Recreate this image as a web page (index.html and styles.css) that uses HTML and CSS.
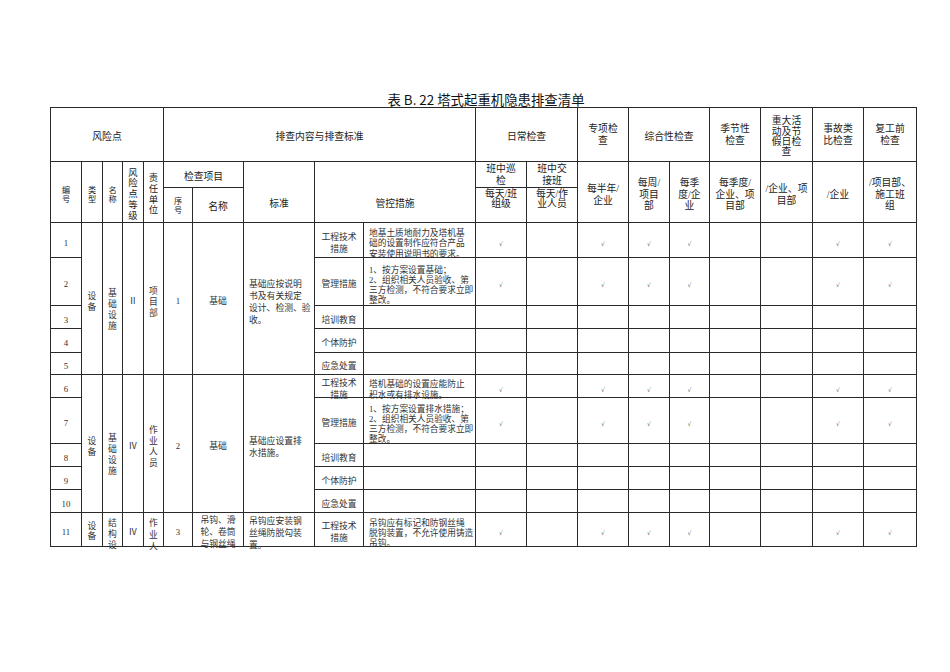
FILE: index.html
```html
<!DOCTYPE html>
<html lang="zh-CN">
<head>
<meta charset="utf-8">
<title>表B.22塔式起重机隐患排查清单</title>
<link rel="stylesheet" href="styles.css">
</head>
<body>
<div class="page">
  <div class="title">表 B. 22 塔式起重机隐患排查清单</div>
  <div class="clip">
    <div class="sheet">
      <!-- header row A -->
      <div class="c h k5">风险点</div>
      <div class="c h k5">排查内容与排查标准</div>
      <div class="c h k2">日常检查</div>
      <div class="c h h2">专项检<br>查</div>
      <div class="c h k2">综合性检查</div>
      <div class="c h h2">季节性<br>检查</div>
      <div class="c h h4">重大活<br>动及节<br>假日检<br>查</div>
      <div class="c h h2">事故类<br>比检查</div>
      <div class="c h h2">复工前<br>检查</div>

      <!-- header row B -->
      <div class="c hb sm r2 p5">编<br>号</div>
      <div class="c hb sm r2 p5">类<br>型</div>
      <div class="c hb sm r2 p5">名<br>称</div>
      <div class="c hb vt r2 p5">风<br>险<br>点<br>等<br>级</div>
      <div class="c hb vt r2 p5">责<br>任<br>单<br>位</div>
      <div class="c hb k2 p4">检查项目</div>
      <div class="c hb r2 p23">标准</div>
      <div class="c hb k2 r2 p23">管控措施</div>
      <div class="c hb">班中巡<br>检</div>
      <div class="c hb">班中交<br>接班</div>
      <div class="c hb r2 p5">每半年/<br>企业</div>
      <div class="c hb r2 p5">每周/<br>项目<br>部</div>
      <div class="c hb r2 p5">每季<br>度/企<br>业</div>
      <div class="c hb r2 p5">每季度/<br>企业、项<br>目部</div>
      <div class="c hb r2 p5">/企业、项<br>目部</div>
      <div class="c hb r2 p5">/企业</div>
      <div class="c hb r2 p5">/项目部、<br>施工班<br>组</div>

      <!-- header row C -->
      <div class="c hb sm p2">序<br>号</div>
      <div class="c hb p4">名称</div>
      <div class="c hb tl pb12">每天/班<br>组级</div>
      <div class="c hb tl pb12">每天/作<br>业人员</div>

      <!-- row 1 -->
      <div class="c">1</div>
      <div class="c r5 lh11">设<br>备</div>
      <div class="c r5 lh11 p20">基<br>础<br>设<br>施</div>
      <div class="c r5">Ⅱ</div>
      <div class="c r5 lh11">项<br>目<br>部</div>
      <div class="c r5">1</div>
      <div class="c r5">基础</div>
      <div class="c r5 L lh12">基础应按说明<br>书及有关规定<br>设计、检测、验<br>收。</div>
      <div class="c">工程技术<br>措施</div>
      <div class="c L t">地基土质地耐力及塔机基<br>础的设置制作应符合产品<br>安装使用说明书的要求。</div>
      <div class="c ck">√</div><div class="c"></div><div class="c ck">√</div><div class="c ck">√</div><div class="c ck">√</div><div class="c"></div><div class="c"></div><div class="c ck">√</div><div class="c ck">√</div>

      <!-- row 2 -->
      <div class="c">2</div>
      <div class="c">管理措施</div>
      <div class="c L t">1、按方案设置基础；<br>2、组织相关人员验收、第<br>三方检测，不符合要求立即<br>整改。</div>
      <div class="c ck">√</div><div class="c"></div><div class="c ck">√</div><div class="c ck">√</div><div class="c ck">√</div><div class="c"></div><div class="c"></div><div class="c ck">√</div><div class="c ck">√</div>

      <!-- row 3 -->
      <div class="c">3</div>
      <div class="c">培训教育</div>
      <div class="c"></div>
      <div class="c"></div><div class="c"></div><div class="c"></div><div class="c"></div><div class="c"></div><div class="c"></div><div class="c"></div><div class="c"></div><div class="c"></div>

      <!-- row 4 -->
      <div class="c">4</div>
      <div class="c">个体防护</div>
      <div class="c"></div>
      <div class="c"></div><div class="c"></div><div class="c"></div><div class="c"></div><div class="c"></div><div class="c"></div><div class="c"></div><div class="c"></div><div class="c"></div>

      <!-- row 5 -->
      <div class="c">5</div>
      <div class="c">应急处置</div>
      <div class="c"></div>
      <div class="c"></div><div class="c"></div><div class="c"></div><div class="c"></div><div class="c"></div><div class="c"></div><div class="c"></div><div class="c"></div><div class="c"></div>

      <!-- row 6 -->
      <div class="c">6</div>
      <div class="c r5 lh11">设<br>备</div>
      <div class="c r5 lh11 p20">基<br>础<br>设<br>施</div>
      <div class="c r5">Ⅳ</div>
      <div class="c r5 lh11">作<br>业<br>人<br>员</div>
      <div class="c r5">2</div>
      <div class="c r5">基础</div>
      <div class="c r5 L lh12">基础应设置排<br>水措施。</div>
      <div class="c">工程技术<br>措施</div>
      <div class="c L t">塔机基础的设置应能防止<br>积水或有排水设施。</div>
      <div class="c ck">√</div><div class="c"></div><div class="c ck">√</div><div class="c ck">√</div><div class="c ck">√</div><div class="c"></div><div class="c"></div><div class="c ck">√</div><div class="c ck">√</div>

      <!-- row 7 -->
      <div class="c">7</div>
      <div class="c">管理措施</div>
      <div class="c L t">1、按方案设置排水措施；<br>2、组织相关人员验收、第<br>三方检测，不符合要求立即<br>整改。</div>
      <div class="c ck">√</div><div class="c"></div><div class="c ck">√</div><div class="c ck">√</div><div class="c ck">√</div><div class="c"></div><div class="c"></div><div class="c ck">√</div><div class="c ck">√</div>

      <!-- row 8 -->
      <div class="c">8</div>
      <div class="c">培训教育</div>
      <div class="c"></div>
      <div class="c"></div><div class="c"></div><div class="c"></div><div class="c"></div><div class="c"></div><div class="c"></div><div class="c"></div><div class="c"></div><div class="c"></div>

      <!-- row 9 -->
      <div class="c">9</div>
      <div class="c">个体防护</div>
      <div class="c"></div>
      <div class="c"></div><div class="c"></div><div class="c"></div><div class="c"></div><div class="c"></div><div class="c"></div><div class="c"></div><div class="c"></div><div class="c"></div>

      <!-- row 10 -->
      <div class="c">10</div>
      <div class="c">应急处置</div>
      <div class="c"></div>
      <div class="c"></div><div class="c"></div><div class="c"></div><div class="c"></div><div class="c"></div><div class="c"></div><div class="c"></div><div class="c"></div><div class="c"></div>

      <!-- row 11 (continues on the next page, cut at the page edge) -->
      <div class="c">11</div>
      <div class="c lh10 p2">设<br>备</div>
      <div class="c lh11 top5">结<br>构<br>设</div>
      <div class="c">Ⅳ</div>
      <div class="c lh12 top4">作<br>业<br>人</div>
      <div class="c">3</div>
      <div class="c">吊钩、滑<br>轮、卷筒<br>与钢丝绳</div>
      <div class="c L lh12">吊钩应安装钢<br>丝绳防脱勾装<br>置。</div>
      <div class="c">工程技术<br>措施</div>
      <div class="c L t">吊钩应有标记和防钢丝绳<br>脱钩装置，不允许使用铸造<br>吊钩。</div>
      <div class="c ck">√</div><div class="c"></div><div class="c ck">√</div><div class="c ck">√</div><div class="c ck">√</div><div class="c"></div><div class="c"></div><div class="c ck">√</div><div class="c ck">√</div>
    </div>
  </div>
</div>
</body>
</html>
```

FILE: styles.css
```css
html, body {
  margin: 0;
  padding: 0;
  background: #ffffff;
}

body {
  font-family: "Liberation Serif", "Noto Sans CJK SC", serif;
  color: #222222;
}

.page {
  margin-left: 50px;
  width: 867px;
  padding-top: 91px;
}

.title {
  height: 16px;
  line-height: 16px;
  font-family: "Noto Sans CJK SC", sans-serif;
  font-size: 13.4px;
  text-align: center;
  padding-left: 5px;
  color: #111111;
  white-space: nowrap;
}

.clip {
  height: 443px;
  overflow: hidden;
}

.sheet {
  display: grid;
  grid-template-columns: 31px 21px 20px 21px 20px 29px 51px 71px 49px 112px 51px 51px 51px 41px 40px 51px 52px 51px 53px;
  grid-template-rows: 54px 26px 35px 35px 48px 23px 24px 22px 23px 46px 23px 23px 23px 34px;
  width: 867px;
  box-sizing: border-box;
  border-top: 1px solid #2a2a2a;
  border-left: 1px solid #2a2a2a;
}

.c {
  box-sizing: border-box;
  min-width: 0;
  min-height: 0;
  border-right: 1px solid #2a2a2a;
  border-bottom: 1px solid #2a2a2a;
  display: flex;
  flex-direction: column;
  justify-content: center;
  align-items: center;
  text-align: center;
  white-space: nowrap;
  padding-top: 7px;
  font-size: 8.8px;
  line-height: 11.7px;
  color: #333333;
}

.k2 { grid-column: span 2; }
.k5 { grid-column: span 5; }
.r2 { grid-row: span 2; }
.r5 { grid-row: span 5; }

/* header cells */
.h {
  font-size: 9.8px;
  line-height: 10.4px;
  padding-top: 5px;
  color: #222222;
}
.h2 { padding-top: 1px; line-height: 11.7px; }
.h4 { padding-top: 5px; line-height: 10.4px; }

.hb {
  font-size: 9.8px;
  line-height: 11.5px;
  padding-top: 0;
  color: #222222;
}
.hb.tl { line-height: 10.4px; }
.sm { font-size: 8.2px; line-height: 9px; }
.vt { font-size: 9.4px; line-height: 10.8px; }

.p2 { padding-top: 2px; }
.p4 { padding-top: 4px; }
.p5 { padding-top: 5px; }
.p20 { padding-top: 22px; }
.p23 { padding-top: 23px; }
.pb12 { padding-bottom: 12px; }

/* body */
.lh10 { line-height: 10px; }
.lh11 { line-height: 11px; }
.lh12 { line-height: 12.2px; }

.L {
  align-items: flex-start;
  text-align: left;
  padding-left: 5px;
}

.t {
  font-size: 8.7px;
  line-height: 10.2px;
}

.top4 { justify-content: flex-start; padding-top: 4px; }
.top5 { justify-content: flex-start; padding-top: 5px; }

.ck {
  font-family: "DejaVu Sans", sans-serif;
  font-size: 6px;
  color: #666666;
}
```
